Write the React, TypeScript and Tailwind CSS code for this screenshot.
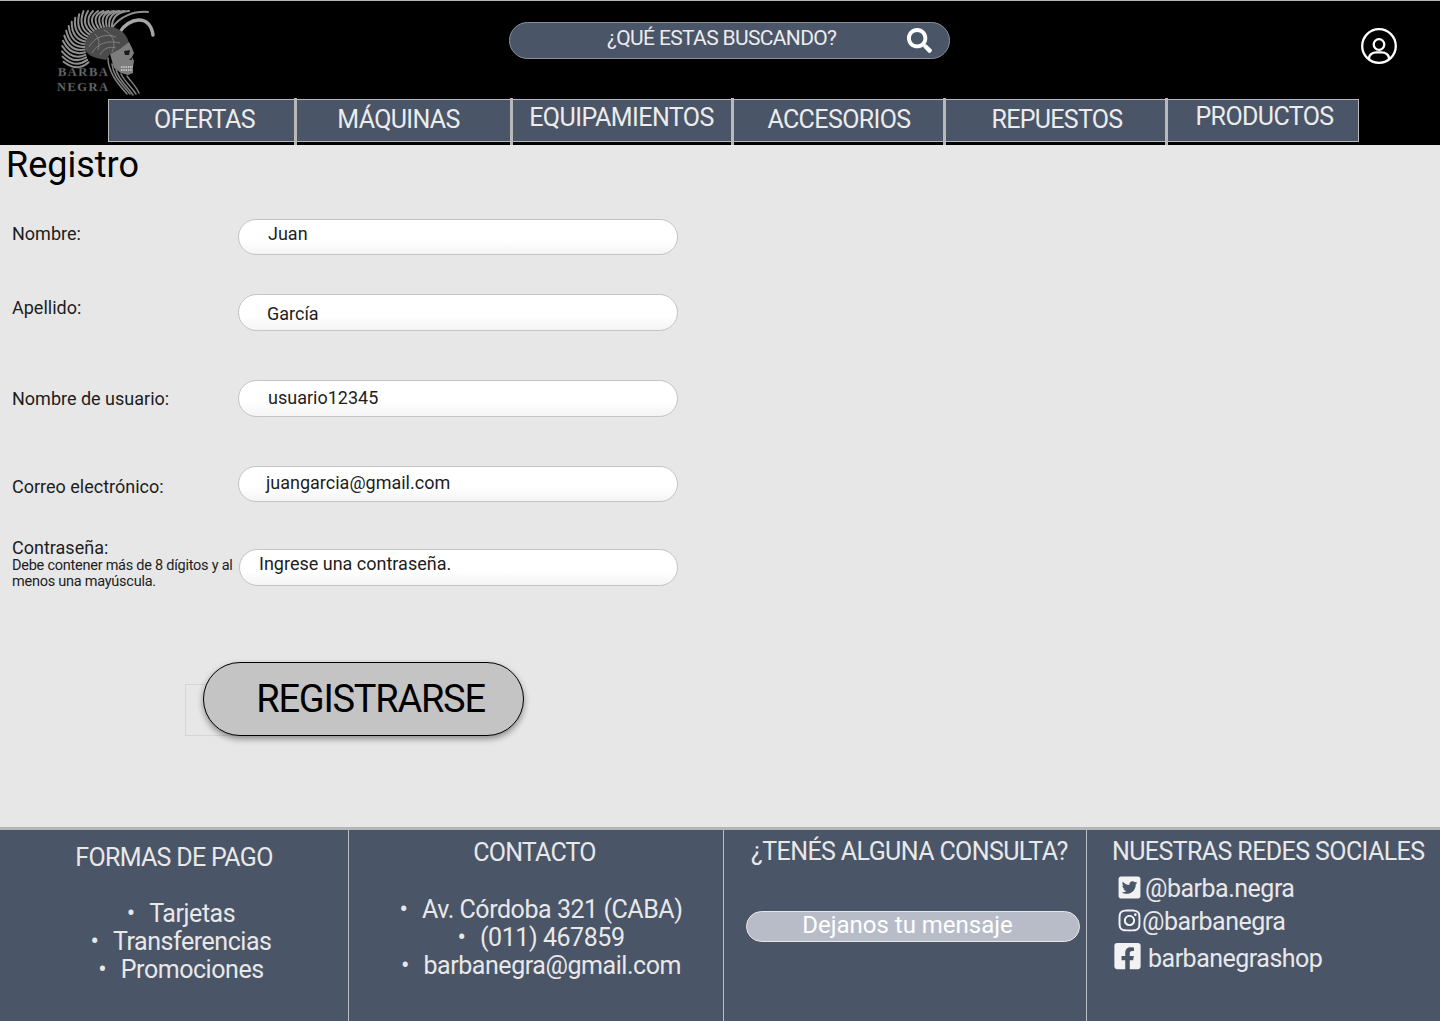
import { FaFacebookSquare, FaInstagram, FaSearch, FaTwitterSquare } from "react-icons/fa";

const NAV_ITEMS = [
  { label: "OFERTAS", width: "w-[188px]", text: "pb-[1px] pl-[5px] tracking-[-0.55px]" },
  { label: "MÁQUINAS", width: "w-[216px]", text: "pb-[1px] pr-[11px] tracking-[-0.65px]" },
  { label: "EQUIPAMIENTOS", width: "w-[221px]", text: "pb-[5px] pr-[2px] tracking-[-0.55px]" },
  { label: "ACCESORIOS", width: "w-[212px]", text: "pb-[1px] tracking-[-0.6px]" },
  { label: "REPUESTOS", width: "w-[222px]", text: "pb-[1px] pl-[2px] tracking-[-0.7px]" },
  { label: "PRODUCTOS", width: "w-[192px]", text: "pb-[7px] pl-[3px] tracking-[-0.6px]" },
];

const FEATHERS = Array.from({ length: 21 }, (_, i) => {
  const a = ((212 - i * 6.6) * Math.PI) / 180;
  const bx = 108 + 23 * Math.cos(a);
  const by = 50 - 23 * Math.sin(a);
  const tx = 108 + 46 * Math.cos(a - 0.3);
  const ty = 50 - 46 * Math.sin(a - 0.3);
  const cx = 108 + 38 * Math.cos(a + 0.08);
  const cy = 50 - 38 * Math.sin(a + 0.08);
  return `M${bx.toFixed(1)} ${by.toFixed(1)}Q${cx.toFixed(1)} ${Math.max(cy, 12).toFixed(1)} ${tx.toFixed(1)} ${Math.max(ty, 11).toFixed(1)}`;
});

function Logo() {
  return (
    <svg viewBox="55 8 102 90" className="h-[90px] w-[102px]">
      <g fill="none" stroke="#8f8f8f" strokeWidth="2" strokeLinecap="round">
        {FEATHERS.map((d) => (
          <path key={d} d={d} />
        ))}
        <path d="M112 28C120 16 134 11 148 12" />
        <path d="M120 32C128 18 150 13 153 35" strokeWidth="3.5" stroke="#a6a6a6" />
      </g>
      <path d="M85 47C85 34 98 26 112 27C122 29 128 36 129 44L120 50L110 54L106 60C96 58 85 56 85 47Z" fill="#4b4b4b" />
      <g fill="none" stroke="#8a8a8a" strokeWidth="0.8">
        <path d="M89 47C94 37 106 33 116 37" />
        <path d="M92 53C97 43 109 40 120 43" />
        <path d="M100 55C103 48 110 46 116 48" />
        <path d="M104 30C112 34 117 42 112 52" />
        <path d="M95 34C99 38 100 43 98 50" />
      </g>
      <path d="M110 54L120 49L129 42L132 48L134 53L132 57L134 61L133 67L133 73L128 75L121 73L114 68Z" fill="#7d7d7d" />
      <path d="M124 51L130 50L129 55L125 55Z" fill="#1a1a1a" />
      <path d="M132 57L129 60H132Z" fill="#222" />
      <path d="M121 67H133M121 70H132" stroke="#d4d4d4" strokeWidth="1.4" strokeDasharray="1.5 0.8" />
      <g fill="none" stroke="#808080" strokeWidth="1.5" strokeLinecap="round">
        <path d="M108 58C108 72 118 84 127 94" />
        <path d="M112 64C113 76 122 84 130 94" />
        <path d="M116 70C119 80 127 86 133 95" />
        <path d="M121 74C125 82 131 86 136 94" />
        <path d="M127 76C131 82 136 86 139 93" />
      </g>
      <g fill="#6d6d6d" stroke="#2a2a2a" strokeWidth="0.3" fontFamily="'Liberation Serif', serif" fontWeight="700" fontSize="12.5" letterSpacing="1.5">
        <text x="58" y="76">BARBA</text>
        <text x="57" y="91">NEGRA</text>
      </g>
    </svg>
  );
}

function UserIcon() {
  return (
    <svg viewBox="0 0 38 38" fill="none" stroke="white" strokeWidth="2.3" className="ml-auto mr-[42px] mt-[26px] h-[38px] w-[38px]">
      <circle cx="19" cy="19" r="16.8" />
      <circle cx="19" cy="17.5" r="5.3" />
      <path d="M9 32.5C8.5 27.5 12.5 25.3 16.5 25.3H21.5C25.5 25.3 29.5 27.5 29 32.5" />
    </svg>
  );
}

function Field({ label, value, className, labelClass, textClass }: { label: string; value: string; className: string; labelClass: string; textClass: string }) {
  return (
    <div className={`flex items-start ${className}`}>
      <span className={labelClass}>{label}</span>
      <div className={`ml-auto w-[440px] rounded-full border border-[#c4c4c4] bg-gradient-to-b from-white from-60% to-[#f4f4f4] ${textClass}`}>
        {value}
      </div>
    </div>
  );
}

function Bullet() {
  return <span className="mr-[3px]">•&nbsp;&nbsp;</span>;
}

export default function App() {
  return (
    <div className="flex min-h-[1021px] flex-col bg-[#e7e7e7] font-['Roboto',sans-serif] text-black">
      <header className="h-[145px] shrink-0 border-t border-[#b5b5b5] bg-black">
        <div className="relative flex h-[98px] items-start">
          <div className="ml-[55px] mt-[7px]">
            <Logo />
          </div>
          <div className="ml-[352px] mt-[21px] flex h-[37px] w-[441px] items-center rounded-full border border-[#8b8f96] bg-[#4a5568] pb-[4px] pl-[97px] text-[21px] tracking-[-0.65px] text-[#ececec]">
            ¿QUÉ ESTAS BUSCANDO?
            <FaSearch className="ml-[71px] mt-[4px] h-[25px] w-[25px] text-white" />
          </div>
          <UserIcon />
        </div>
        <nav className="ml-[108px] flex w-[1251px]">
          {NAV_ITEMS.map((item, i) => (
            <div key={item.label} className={`relative flex h-[43px] items-center justify-center border border-[#b9b9b9] bg-[#4a5568] text-[25px] text-[#ececec] ${item.width} ${item.text}`}>
              {item.label}
              {i < 5 && <span className="absolute -right-[2px] -top-[2px] h-[47px] w-[3px] bg-[#b9b9b9]" />}
            </div>
          ))}
        </nav>
      </header>

      <main className="flex-1 pl-[7px] pb-[91px]">
        <h1 className="mt-[-1px] -ml-[1px] text-[36px] leading-[42px]">Registro</h1>
        <div className="ml-[5px] w-[666px] text-[18px] leading-[21px] text-[#1d1d1d]">
          <Field label="Nombre:" labelClass="pt-[4px]" value="Juan" className="mt-[33px]" textClass="h-[36px] pl-[29px] pt-[3px]" />
          <Field label="Apellido:" labelClass="pt-[3px]" value="García" className="mt-[39px]" textClass="h-[37px] pl-[28px] pt-[8px]" />
          <Field label="Nombre de usuario:" labelClass="pt-[8px]" value="usuario12345" className="mt-[49px]" textClass="h-[37px] pl-[29px] pt-[6px]" />
          <Field label="Correo electrónico:" labelClass="pt-[10px]" value="juangarcia@gmail.com" className="mt-[49px]" textClass="h-[36px] pl-[27px] pt-[5px]" />
          <div className="mt-[47px] flex items-start">
            <div className="-mt-[11px] w-[227px] shrink-0 leading-[20px]">
              Contraseña:
              <p className="text-[14.5px] leading-[16px] tracking-[-0.25px]">Debe contener más de 8 dígitos y al menos una mayúscula.</p>
            </div>
            <div className="ml-auto h-[37px] w-[440px] rounded-full border border-[#c4c4c4] bg-gradient-to-b from-white from-60% to-[#f4f4f4] pl-[19px] pt-[3px]">
              Ingrese una contraseña.
            </div>
          </div>
        </div>
        <div className="relative ml-[196px] mt-[72px] w-[321px]">
          <span className="absolute -left-[18px] bottom-0 h-[52px] w-[60px] border border-[#d6d6d6]" />
          <button className="relative flex h-[74px] w-[321px] items-center justify-center rounded-full border border-black bg-[#c4c4c4] pl-[14px] text-[38px] tracking-[-1.25px] shadow-[0_3px_6px_rgba(0,0,0,0.4)]">
            REGISTRARSE
          </button>
        </div>
      </main>

      <footer className="flex h-[194px] shrink-0 border-t-[3px] border-[#b5b5b5] bg-[#4a5568] text-[25px] leading-[28px] text-[#e8e8e8]">
        <section className="h-full w-[349px] shrink-0 border-r border-[#b9bec6] pt-[14px] text-center tracking-[-0.45px]">
          <h2 className="tracking-[-0.7px]">FORMAS DE PAGO</h2>
          <ul className="ml-[14px] mt-[28px]">
            <li><Bullet />Tarjetas</li>
            <li><Bullet />Transferencias</li>
            <li><Bullet />Promociones</li>
          </ul>
        </section>
        <section className="h-full w-[375px] shrink-0 border-r border-[#b9bec6] pt-[9px] text-center tracking-[-0.45px]">
          <h2 className="mr-[3px] tracking-[-0.8px]">CONTACTO</h2>
          <ul className="ml-[10px] mt-[29px]">
            <li><Bullet />Av. Córdoba 321 (CABA)</li>
            <li><Bullet />(011) 467859</li>
            <li><Bullet />barbanegra@gmail.com</li>
          </ul>
        </section>
        <section className="h-full w-[363px] shrink-0 border-r border-[#b9bec6] pt-[8px] tracking-[-0.6px]">
          <h2 className="pl-[27px]">¿TENÉS ALGUNA CONSULTA?</h2>
          <div className="ml-[22px] mt-[45px] flex h-[31px] w-[334px] items-center justify-center rounded-full border border-[#e6e6e6] bg-[#b8bcc9] pb-[3px] pr-[11px] text-[24px] tracking-normal text-white">
            Dejanos tu mensaje
          </div>
        </section>
        <section className="flex-1 pl-[26px] pt-[8px] tracking-[-0.5px]">
          <h2 className="-ml-[1px] tracking-[-0.6px]">NUESTRAS REDES SOCIALES</h2>
          <div className="ml-[4px] mt-[9px] flex items-center gap-[3px]">
            <FaTwitterSquare className="-mt-[4px] h-[25px] w-[25px] text-[#f2f2f2]" />
            @barba.negra
          </div>
          <div className="ml-[4px] mt-[5px] flex items-center gap-[0px]">
            <FaInstagram className="-mt-[4px] h-[25px] w-[25px] text-[#f2f2f2]" />
            @barbanegra
          </div>
          <div className="ml-[1px] mt-[9px] flex items-center gap-[7px]">
            <FaFacebookSquare className="-mt-[6px] h-[30px] w-[27px] text-[#f2f2f2]" />
            barbanegrashop
          </div>
        </section>
      </footer>
    </div>
  );
}
